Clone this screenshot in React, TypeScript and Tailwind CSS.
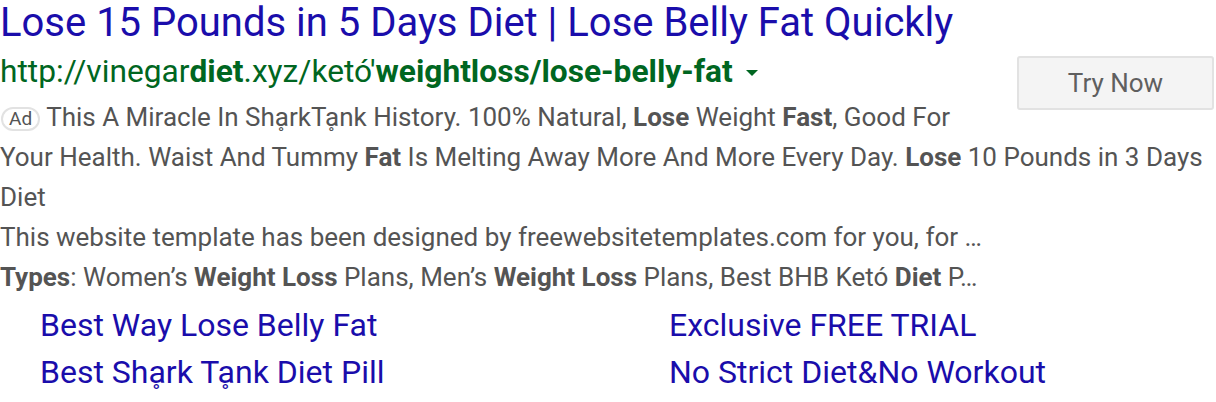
const font = { fontFamily: 'Roboto, "Noto Sans", sans-serif' }

const App = () => {
    const ring = "\u1E01"
    return (
        <div className="w-[1216px] h-[402px] bg-white overflow-hidden" style={font}>
            <div className="float-right w-[216px] h-[130px] pt-[56px] pl-[17px] pr-[2px]">
                <button className="w-[197px] h-[54px] rounded-[3px] border-2 border-[#e2e2e2] bg-[#f4f4f4] text-[26px] leading-none text-[#5f5f5f]">
                    Try Now
                </button>
            </div>

            <h3 className="text-[40px] leading-[46px] text-[#1a0dab] whitespace-nowrap">
                Lose 15 Pounds in 5 Days Diet | Lose Belly Fat Quickly
            </h3>
            <div className="flex items-center text-[31.7px] leading-[51px] text-[#006621] whitespace-nowrap">
                <span>
                    http://vinegar<b className="font-bold">diet</b>.xyz/ketó'<b className="font-bold">weightloss/lose-belly-fat</b>
                </span>
                <span className="ml-[13px] mt-[2px] w-0 h-0 border-x-[6px] border-x-transparent border-t-[6px] border-t-[#006621]"></span>
            </div>

            <div className="text-[26px] leading-[40px] text-[#545454]">
                <p>
                    <span className="inline-flex items-center justify-center h-[24px] px-[6px] ml-[1px] mr-[6px] rounded-full border-2 border-[#e2e2e2] text-[19px] leading-none align-[1px] text-[#545454]">Ad</span>
                    This A Miracle In Sh{ring}rkT{ring}nk History. 100% Natural, <b className="font-bold">Lose</b> Weight <b className="font-bold">Fast</b>, Good For Your Health. Waist And Tummy <b className="font-bold">Fat</b> Is Melting Away More And More Every Day. <b className="font-bold">Lose</b> 10 Pounds in 3 Days Diet
                </p>
                <p className="whitespace-nowrap">This website template has been designed by freewebsitetemplates.com for you, for …</p>
                <p className="whitespace-nowrap">
                    <b className="font-bold">Types</b>: Women’s <b className="font-bold">Weight Loss</b> Plans, Men’s <b className="font-bold">Weight Loss</b> Plans, Best BHB Ketó <b className="font-bold">Diet</b> P…
                </p>
            </div>

            <div className="grid grid-cols-[629px_1fr] pl-[40px] mt-[5px] text-[32px] leading-[47px] text-[#1a0dab]">
                <span>Best Way Lose Belly Fat</span>
                <span>Exclusive FREE TRIAL</span>
                <span>Best Sh{ring}rk T{ring}nk Diet Pill</span>
                <span>No Strict Diet&amp;No Workout</span>
            </div>
        </div>
    )
}

export default App
